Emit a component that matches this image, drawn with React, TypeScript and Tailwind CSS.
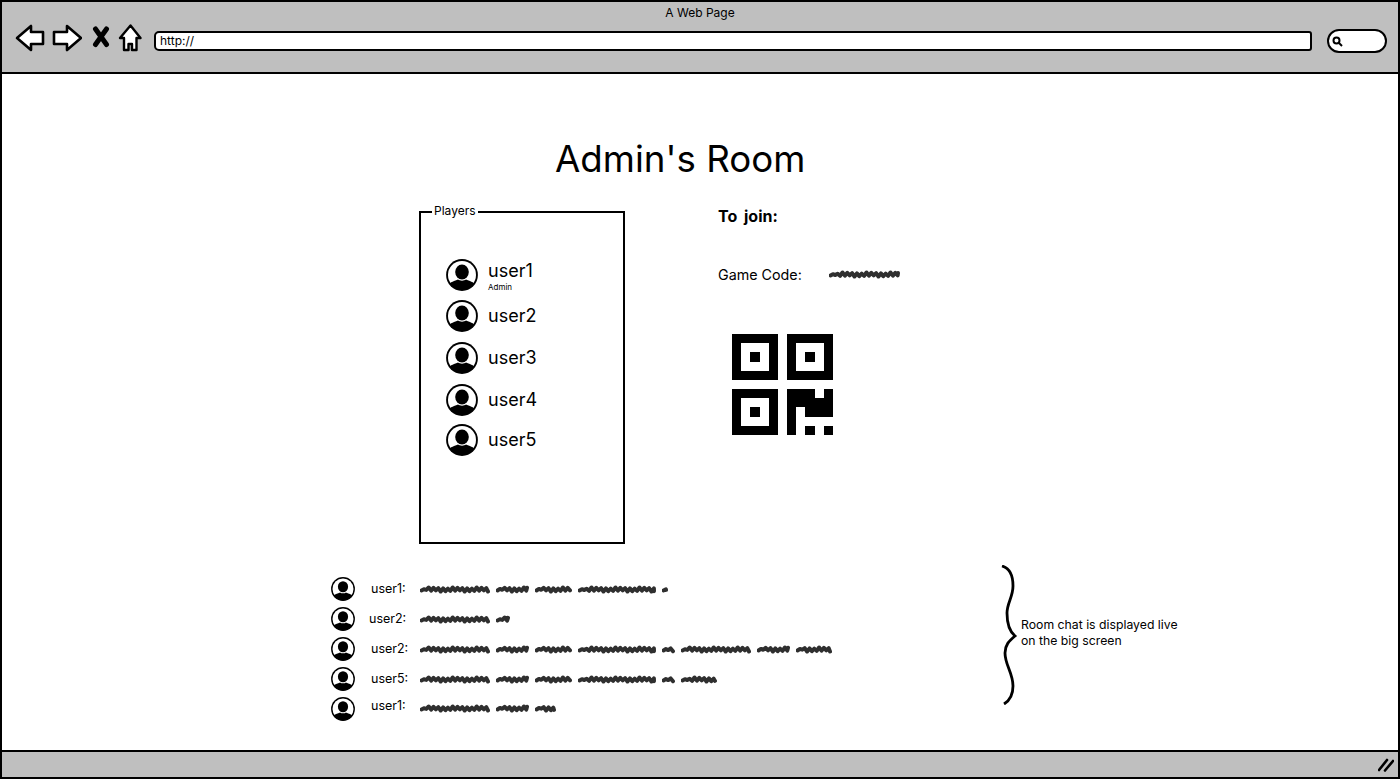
import React from "react";

const font = { fontFamily: '"Inter", "Noto Sans", sans-serif' };

function wobble(width: number, seed: number) {
  const h = 10;
  let d = "M1.5 " + (h / 2 + 0.5);
  let x = 1.5;
  let i = 0;
  while (x < width - 2) {
    x = Math.min(x + 2.4, width - 2);
    const amp = 0.8 + ((i * 7 + seed) % 5) * 0.3;
    const taper = x < 7 ? 0.3 : 1;
    const y = h / 2 - 0.5 + (i % 2 === 0 ? -amp : amp) * taper;
    d += ` L${x.toFixed(1)} ${y.toFixed(1)}`;
    i++;
  }
  return d;
}

function Scribble({ words }: { words: number[] }) {
  return (
    <div className="flex items-center gap-[6px]">
      {words.map((w, i) => (
        <svg key={i} width={w} height={10} viewBox={`0 0 ${w} 10`} className="shrink-0">
          <path d={wobble(w, i + w)} fill="none" stroke="#2f2f2f" strokeWidth="4" strokeLinejoin="round" strokeLinecap="round" />
        </svg>
      ))}
    </div>
  );
}

function Avatar({ size, cls }: { size: number; cls?: string }) {
  const id = React.useId();
  return (
    <svg width={size} height={size} viewBox="0 0 32 32" className={`shrink-0 ${cls ?? ""}`}>
      <defs>
        <clipPath id={id}>
          <circle cx="16" cy="16" r="15" />
        </clipPath>
      </defs>
      <circle cx="16" cy="16" r="15.9" fill="#000" />
      <circle cx="16" cy="16" r="14" fill="#fff" />
      <g clipPath={`url(#${id})`}>
        <ellipse cx="16" cy="13" rx="6.8" ry="7.4" fill="#000" />
        <path d="M2 32 V27 C4 22.5 9 22 12 20.5 C14 22 18 22 20 20.5 C23 22 28 22.5 30 27 V32 Z" fill="#000" />
      </g>
    </svg>
  );
}

const players = [
  { name: "user1", sub: "Admin", cls: "mt-[38px]" },
  { name: "user2", cls: "mt-[8px]" },
  { name: "user3", cls: "mt-[10px]" },
  { name: "user4", cls: "mt-[10px]" },
  { name: "user5", cls: "mt-[8px]" },
];

const chat = [
  { name: "user1:", words: [70, 33, 37, 78, 6], nameCls: "ml-[16px] w-[49px]" },
  { name: "user2:", words: [70, 14], nameCls: "ml-[14px] w-[51px]" },
  { name: "user2:", words: [70, 33, 37, 78, 13, 70, 33, 36], nameCls: "ml-[16px] w-[49px]" },
  { name: "user5:", words: [70, 33, 37, 78, 13, 36], nameCls: "ml-[16px] w-[49px]" },
  { name: "user1:", words: [70, 33, 21], nameCls: "ml-[16px] w-[49px] -mt-[6px]" },
];

const qr =
  "M0 0h5v5h-5z M1 1v3h3v-3z M2 2h1v1h-1z M6 0h5v5h-5z M7 1v3h3v-3z M8 2h1v1h-1z M0 6h5v5h-5z M1 7v3h3v-3z M2 8h1v1h-1z " +
  "M6 6h3v1h-3z M10 6h1v1h-1z M6 7h5v1h-5z M6 8h1v3h-1z M8 8h3v1h-3z M8 10h1v1h-1z M10 10h1v1h-1z";

export default function App() {
  return (
    <div style={font} className="w-[1400px] h-[779px] border-2 border-black bg-white flex flex-col text-black overflow-hidden">
      <header className="h-[72px] shrink-0 bg-[#bfbfbf] border-b-2 border-black">
        <div className="h-[22px] flex items-center justify-center text-[12px]">A Web Page</div>
        <div className="flex items-start pl-[13px] pr-[11px]">
          <svg width="30" height="28" viewBox="15 23 30 28" className="shrink-0">
            <path d="M17 37 L31 25 L31 31 L43 31 L43 43 L31 43 L31 49 Z" fill="#fff" stroke="#000" strokeWidth="2.6" strokeLinejoin="round" />
          </svg>
          <svg width="30" height="28" viewBox="52 23 30 28" className="shrink-0 ml-[7px]">
            <path d="M54 31 L67 31 L67 25 L81 37 L67 49 L67 43 L54 43 Z" fill="#fff" stroke="#000" strokeWidth="2.6" strokeLinejoin="round" />
          </svg>
          <svg width="20" height="28" viewBox="91 23 20 28" className="shrink-0 ml-[9px]">
            <path d="M95.5 28 L106.5 43.5 M106.5 28 L95.5 43.5" fill="none" stroke="#000" strokeWidth="5" strokeLinecap="round" />
          </svg>
          <svg width="24" height="28" viewBox="118 23 24 28" className="shrink-0 ml-[7px]">
            <path d="M130.5 24.5 L140.5 37 L136.5 37 L136.5 49 L132 49 L132 43 L128.5 43 L128.5 49 L124 49 L124 37 L120 37 Z" fill="#fff" stroke="#000" strokeWidth="2.4" strokeLinejoin="round" />
          </svg>
          <div className="ml-[12px] mt-[7px] flex-1 h-[20px] bg-white border-2 border-black rounded-[3px] rounded-l-[5px] pl-[4px] text-[12px] leading-[16px]">
            http://
          </div>
          <div className="ml-[15px] mt-[5px] w-[60px] h-[24px] bg-white border-2 border-black rounded-[12px] flex items-center pl-[3px] shrink-0">
            <svg width="11" height="11" viewBox="0 0 11 11">
              <circle cx="4.5" cy="4.5" r="3" fill="none" stroke="#000" strokeWidth="2" />
              <path d="M7 7 L10 10" stroke="#000" strokeWidth="2" />
            </svg>
          </div>
        </div>
      </header>

      <main className="flex-1 min-h-0">
        <h1 className="mt-[63px] pl-[553px] text-[36.7px] leading-[44px] font-normal">Admin's Room</h1>

        <div className="mt-[22px] flex pl-[417px]">
          <fieldset className="w-[206px] h-[341px] border-2 border-black shrink-0">
            <legend className="ml-[11px] px-[2px] pb-[2px] text-[12px] leading-[15px]">Players</legend>
            <div className="pl-[25px]">
              {players.map((p) => (
                <div key={p.name} className={`flex items-center gap-[10px] ${p.cls}`}>
                  <Avatar size={32} />
                  <div className={p.sub ? "flex flex-col pt-[2px]" : "flex flex-col"}>
                    <span className="text-[18px] leading-[22px]">{p.name}</span>
                    {p.sub && <span className="text-[8px] leading-[10px]">{p.sub}</span>}
                  </div>
                </div>
              ))}
            </div>
          </fieldset>

          <section className="ml-[93px] flex flex-col">
            <div className="mt-[2px] text-[16px] leading-[22px] font-bold [word-spacing:3px]">To join:</div>
            <div className="mt-[38px] flex items-center h-[20px] text-[14.3px]">
              <span className="w-[111px]">Game Code:</span>
              <Scribble words={[71]} />
            </div>
            <svg width="101" height="101" viewBox="0 0 11 11" className="mt-[49px] ml-[14px]" shapeRendering="crispEdges">
              <path d={qr} fill="#000" fillRule="evenodd" />
            </svg>
          </section>
        </div>

        <div className="mt-[21px] flex pl-[329px]">
          <div className="w-[669px] shrink-0 pt-[12px] flex flex-col gap-[5px]">
            {chat.map((c, i) => (
              <div key={i} className="h-[25px] flex items-center">
                <Avatar size={24} cls="-mt-[1px]" />
                <span className={`text-[12.5px] shrink-0 ${c.nameCls}`}>{c.name}</span>
                <div className={i === 4 ? "-mt-[2px]" : ""}>
                  <Scribble words={c.words} />
                </div>
              </div>
            ))}
          </div>
          <svg width="20" height="140" viewBox="0 0 20 140" className="shrink-0">
            <path
              d="M2 1 C9 3 13 10 13 21 C13 32 7 38 7 48 C7 58 9 66 15 71 C9 76 5 80 5 88 C5 100 13 108 13 121 C13 130 9 136 4 139"
              fill="none"
              stroke="#000"
              strokeWidth="2.8"
            />
          </svg>
          <p className="ml-[1px] pt-[52px] text-[12.25px] leading-[16px] w-[180px]">
            Room chat is displayed live
            <br />
            on the big screen
          </p>
        </div>
      </main>

      <footer className="h-[27px] shrink-0 bg-[#bfbfbf] border-t-2 border-black flex items-center justify-end pr-[4px]">
        <svg width="16" height="15" viewBox="0 0 16 15">
          <path d="M1 13 L9 3 M7 13.5 L15 4" stroke="#000" strokeWidth="2.6" strokeLinecap="round" />
        </svg>
      </footer>
    </div>
  );
}
